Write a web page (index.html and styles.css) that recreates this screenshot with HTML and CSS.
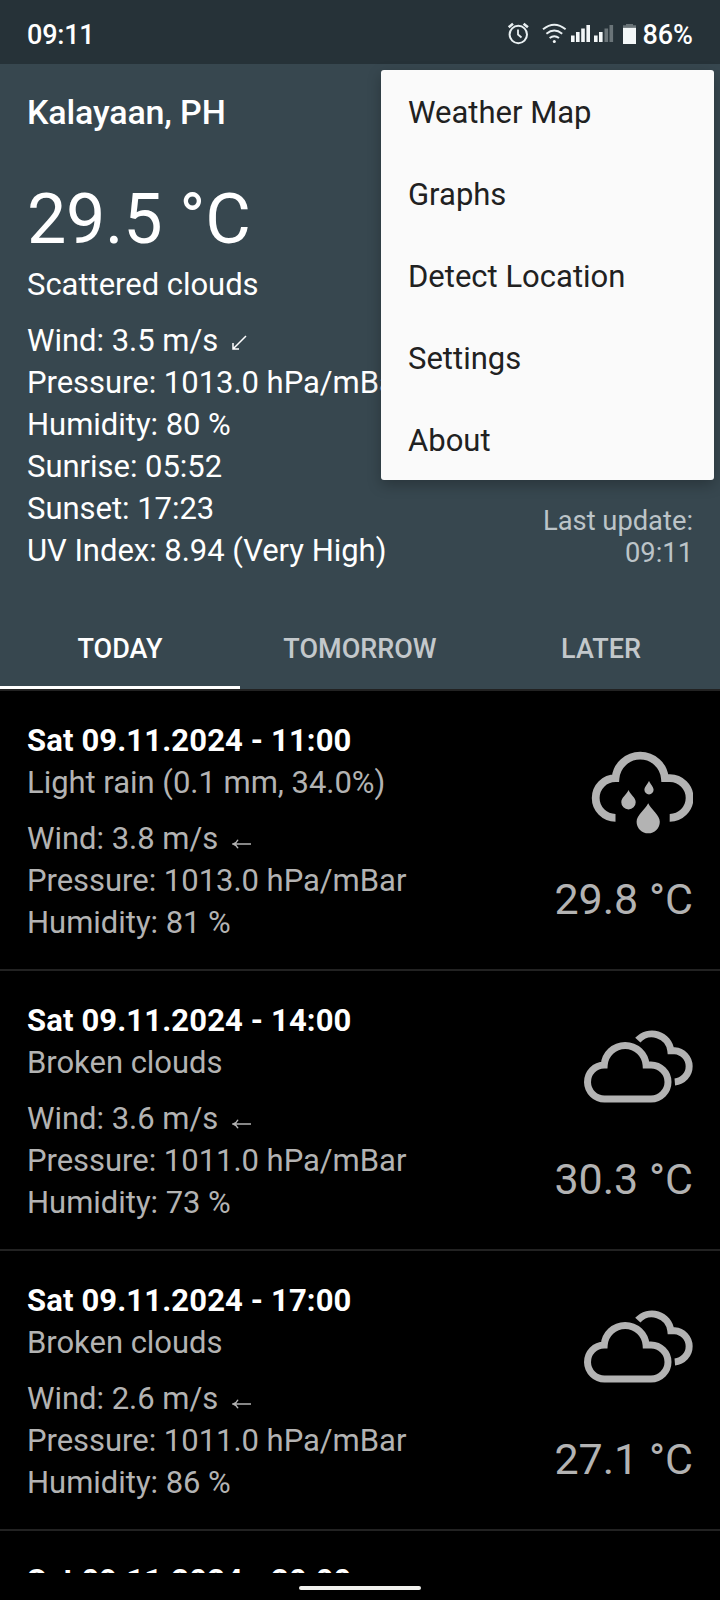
FILE: index.html
```html
<!DOCTYPE html>
<html lang="en">
<head>
<meta charset="utf-8">
<title>Weather</title>
<link rel="stylesheet" href="styles.css">
</head>
<body>
<svg width="0" height="0" class="defs">
  <symbol id="left" viewBox="0 0 20 12"><path d="M1.2 6H19M6 1.8Q4.6 5 1.2 6Q4.6 7 6 10.2" fill="none" stroke="currentColor" stroke-width="1.4"/></symbol>
  <symbol id="rain" viewBox="42.500 18 110 90">
    <path d="M75 87.8A19.8 19.8 0 0 1 75 48.2A24.8 24.8 0 0 1 124.4 48.2H129.4A19.8 19.8 0 0 1 129.2 87.8" fill="none" stroke="currentColor" stroke-width="7.8"/>
    <path d="M88 60C90 65 95.2 67.500 95.200 72.200A7.200 7.200 0 0 1 80.800 72.200C80.800 67.500 86 65 88 60ZM108.500 50.700C109.600 54 113.100 56.500 113.100 59.800A4.600 4.600 0 0 1 103.900 59.800C103.900 56.500 107.400 54 108.500 50.700ZM107.700 73.300C111 80 119.300 85 119.300 91.700A11.600 11.600 0 0 1 96.100 91.700C96.100 85 104.400 80 107.700 73.300Z" fill="currentColor"/>
  </symbol>
  <symbol id="clouds" viewBox="42.500 17.500 110 90">
    <path d="M64.300 88.500A17 17 0 0 1 63.700 54.500A21 21 0 0 1 105.600 54.500H110.500A17 17 0 0 1 110.500 88.500Z" fill="none" stroke="currentColor" stroke-width="7"/>
    <path d="M97.300 29.700A19 19 0 0 1 130.300 40.200H134.100A15.700 15.700 0 0 1 134.300 71.500" fill="none" stroke="currentColor" stroke-width="7"/>
  </symbol>
</svg>
<div class="screen">
  <header class="status">
    <span class="clock">09:11</span>
    <svg class="status-icons" width="136" height="32" viewBox="504 18 136 32">
      <g fill="none" stroke="#e9f0f2" stroke-width="2">
        <circle cx="518.300" cy="34.500" r="8.700"/>
        <path d="M518 29.500V34.500L521.500 37.500" stroke-width="1.800"/>
        <path d="M508.700 27.300L513 23.800M527.900 27.300L523.600 23.800" stroke-width="2.600"/>
        <path d="M543 29.200Q554.300 20.200 565.600 29.200M546.400 33.700Q554.300 27.400 562.200 33.700M549.600 38.100Q554.300 34.300 559 38.100" stroke-width="1.900"/>
      </g>
      <g fill="#f3f7f8">
        <circle cx="554.300" cy="41.500" r="1.500"/>
        <path d="M571 35.500h3.600V42H571zM576 32h3.600V42H576zM581.200 28.500h3.600V42h-3.600zM586.400 25h3.600V42h-3.600zM594 35.500h3.600V42H594zM599 32h3.600V42H599z"/>
        <path d="M623 27.500h13V44h-13z"/>
      </g>
      <path d="M604.500 28.500h3.600V42h-3.600zM609.500 25h3.600V42h-3.600zM626 24h7v1.200h3v2.300h-13v-2.300h3z" fill="#6a7478"/>
    </svg>
    <span class="battery">86%</span>
  </header>

  <main class="content">
    <section class="current">
      <h1 class="city">Kalayaan, PH</h1>
      <div class="temp-now">29.5 °C</div>
      <div class="line">Scattered clouds</div>
      <div class="current-row">
        <div class="details">
          <div class="line">Wind: 3.5 m/s <svg class="arrow-sw" width="16" height="16" viewBox="0 0 16 16"><path d="M15 1L2 14M2 8V14H8" fill="none" stroke="currentColor" stroke-width="1.500"/></svg></div>
          <div class="line">Pressure: 1013.0 hPa/mBar</div>
          <div class="line">Humidity: 80 %</div>
          <div class="line">Sunrise: 05:52</div>
          <div class="line">Sunset: 17:23</div>
          <div class="line">UV Index: 8.94 (Very High)</div>
        </div>
        <div class="updated">Last update:<br>09:11</div>
      </div>
    </section>
    <nav class="tabs">
      <div class="tab active">TODAY</div>
      <div class="tab">TOMORROW</div>
      <div class="tab">LATER</div>
    </nav>
    <section class="forecast">
      <article class="item">
        <div class="info">
          <div class="line date">Sat 09.11.2024 - 11:00</div>
          <div class="line">Light rain (0.1 mm, 34.0%)</div>
          <div class="line wind">Wind: 3.8 m/s <svg class="arrow" width="20" height="12"><use href="#left"/></svg></div>
          <div class="line">Pressure: 1013.0 hPa/mBar</div>
          <div class="line">Humidity: 81 %</div>
        </div>
        <div class="side"><svg class="weather" width="110" height="90"><use href="#rain"/></svg><div class="temp">29.8 °C</div></div>
      </article>
      <article class="item">
        <div class="info">
          <div class="line date">Sat 09.11.2024 - 14:00</div>
          <div class="line">Broken clouds</div>
          <div class="line wind">Wind: 3.6 m/s <svg class="arrow" width="20" height="12"><use href="#left"/></svg></div>
          <div class="line">Pressure: 1011.0 hPa/mBar</div>
          <div class="line">Humidity: 73 %</div>
        </div>
        <div class="side"><svg class="weather" width="110" height="90"><use href="#clouds"/></svg><div class="temp">30.3 °C</div></div>
      </article>
      <article class="item">
        <div class="info">
          <div class="line date">Sat 09.11.2024 - 17:00</div>
          <div class="line">Broken clouds</div>
          <div class="line wind">Wind: 2.6 m/s <svg class="arrow" width="20" height="12"><use href="#left"/></svg></div>
          <div class="line">Pressure: 1011.0 hPa/mBar</div>
          <div class="line">Humidity: 86 %</div>
        </div>
        <div class="side"><svg class="weather" width="110" height="90"><use href="#clouds"/></svg><div class="temp">27.1 °C</div></div>
      </article>
      <article class="item">
        <div class="info"><div class="line date">Sat 09.11.2024 - 20:00</div></div>
      </article>
    </section>
  </main>
  <footer class="gesture"><div class="pill"></div></footer>

  <div class="menu">
    <div class="menu-item">Weather Map</div>
    <div class="menu-item">Graphs</div>
    <div class="menu-item">Detect Location</div>
    <div class="menu-item">Settings</div>
    <div class="menu-item">About</div>
  </div>
</div>
</body>
</html>
```

FILE: styles.css
```css
* { box-sizing: border-box; }
body { margin: 0; background: #000; font-family: Roboto, sans-serif; }
.defs { position: absolute; }
.screen {
  position: relative;
  display: flex;
  flex-direction: column;
  width: 720px;
  height: 1600px;
  overflow: hidden;
  color: #fff;
}
.status {
  display: flex;
  align-items: center;
  flex: none;
  height: 64px;
  padding: 6px 27px 0;
  background: #263238;
  font-size: 27px;
  font-weight: 500;
}
.clock { flex: 1; letter-spacing: -0.2px; }
.status-icons { margin: -2px 2px 0 0; }
.content { flex: none; height: 1509px; overflow: hidden; }
.current { height: 543px; padding: 24px 27px 0; background: #37474f; }
.city { margin: 0; font-size: 34px; line-height: 48px; font-weight: 500; letter-spacing: -0.15px; }
.temp-now { margin-top: 33px; font-size: 70px; line-height: 100px; letter-spacing: -0.3px; }
.line { font-size: 31px; line-height: 42px; letter-spacing: -0.03px; white-space: nowrap; }
.current .temp-now + .line { margin-top: -5px; }
.current-row { display: flex; justify-content: space-between; align-items: flex-end; margin-top: 14px; }
.arrow-sw { margin-left: 5px; vertical-align: 0; }
.updated { padding-bottom: 3px; font-size: 27.3px; line-height: 32px; text-align: right; color: #bcc4c8; white-space: nowrap; }
.tabs { display: grid; grid-template-columns: repeat(3, 1fr); height: 84px; background: #37474f; border-bottom: 2px solid #222; }
.tab {
  padding-top: 23px;
  height: 82px;
  text-align: center;
  font-size: 27px;
  line-height: 38px;
  font-weight: 500;
  color: #c3c8cb;
}
.tab:last-child { padding-left: 2px; }
.tab.active { color: #fff; border-bottom: 3px solid #fff; }
.item {
  display: flex;
  justify-content: space-between;
  height: 280px;
  padding: 29px 27px 0;
  border-bottom: 2px solid #222;
  color: #b3b3b3;
}
.date { font-weight: 700; letter-spacing: 0.13px; color: #fff; }
.wind { margin-top: 14px; }
.arrow { margin-left: 6px; vertical-align: -1px; }
.side { display: flex; flex-direction: column; align-items: flex-end; padding-top: 28px; }
.weather { overflow: visible; }
.temp { margin-top: 33px; font-size: 43px; line-height: 56px; }
.gesture { display: flex; justify-content: center; padding-top: 13px; flex: 1; background: #000; }
.pill { width: 122px; height: 4px; border-radius: 2px; background: #f1f1ee; }
.menu {
  position: absolute;
  top: 70px;
  left: 381px;
  width: 333px;
  height: 410px;
  border-radius: 3px;
  background: #fafafa;
  color: #212121;
  box-shadow: 0 5px 14px rgba(0, 0, 0, .25);
}
.menu-item { height: 82px; padding-left: 27px; font-size: 31px; line-height: 86px; }
```
